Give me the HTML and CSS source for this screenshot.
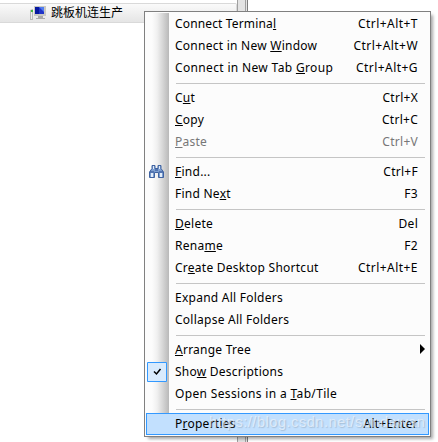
FILE: index.html
```html
<!DOCTYPE html>
<html lang="en">
<head>
<meta charset="utf-8">
<title>Sessions</title>
<link rel="stylesheet" href="styles.css">
</head>
<body>
<div class="window">
  <div class="tree">
    <div class="session">
      <svg class="computer" width="17" height="16" viewBox="0 0 17 16">
        <path d="M0 5l3-1v11H0z" fill="#b9b9b9"/>
        <path d="M1 6h1v8H1z" fill="#eee"/>
        <path d="M1 5h2v2H1z" fill="#42b842"/>
        <path d="M4 1h12v10H4z" fill="#c9c9c4"/>
        <path d="M5 2h9v7H5z" fill="#2034c8"/>
        <path d="M5 2h4v7H5z" fill="#0718a0"/>
        <path d="M9 2l5 5V2z" fill="#527df0"/>
        <path d="M8 11h5v2h2v1H6v-1h2z" fill="#aaa"/>
      </svg>
      <span>跳板机连生产</span>
    </div>
  </div>
  <div class="splitter"></div>
  <div class="workspace"></div>
</div>
<div class="menu">
  <div class="item"><span class="snug">Connect Termina<u>l</u></span><kbd class="wide">Ctrl+Alt+T</kbd></div>
  <div class="item"><span>Connect in New <u>W</u>indow</span><kbd class="wide">Ctrl+Alt+W</kbd></div>
  <div class="item"><span class="roomy">Connect in New Tab <u>G</u>roup</span><kbd class="wide">Ctrl+Alt+G</kbd></div>
  <div class="separator"></div>
  <div class="item"><span>C<u>u</u>t</span><kbd>Ctrl+X</kbd></div>
  <div class="item"><span><u>C</u>opy</span><kbd>Ctrl+C</kbd></div>
  <div class="item disabled"><span><u>P</u>aste</span><kbd>Ctrl+V</kbd></div>
  <div class="separator"></div>
  <div class="item">
    <svg class="binoculars" width="15" height="13" viewBox="0 0 15 13">
      <path d="M3 .5h3v3h3v-3h3v3l2.500 3.500v5.500h-5v-5h-4v5h-5v-5.500l2.500-3.500z" fill="#7c9ed0" stroke="#3f62a0"/>
      <path d="M4 1h1v3H4zM10 1h1v3h-1zM2 8h2v4H2zM11 8h2v4h-2z" fill="#e2edfa"/>
      <path d="M1 7h4M10 7h4M6 5h3" stroke="#2b4c92"/>
    </svg>
    <span><u>F</u>ind...</span><kbd>Ctrl+F</kbd></div>
  <div class="item"><span>Find Ne<u>x</u>t</span><kbd>F3</kbd></div>
  <div class="separator"></div>
  <div class="item"><span><u>D</u>elete</span><kbd>Del</kbd></div>
  <div class="item"><span>Rena<u>m</u>e</span><kbd>F2</kbd></div>
  <div class="item"><span>Cr<u>e</u>ate Desktop Shortcut</span><kbd class="wide">Ctrl+Alt+E</kbd></div>
  <div class="separator"></div>
  <div class="item"><span>Expand All Folders</span></div>
  <div class="item"><span>Collapse All Folders</span></div>
  <div class="separator"></div>
  <div class="item"><span><u>A</u>rrange Tree</span><i class="arrow"></i></div>
  <div class="item">
    <svg class="check" width="20" height="20" viewBox="0 0 20 20">
      <path d="M.5.5h19v19H.5z" fill="#d9ebfd" stroke="#3399ff"/>
      <path d="M7 9.500l2.500 2.500 4-5" fill="none" stroke="#000" stroke-width="1.500"/>
    </svg>
    <span>Sho<u>w</u> Descriptions</span></div>
  <div class="item"><span class="roomy">Open Sessions in a <u>T</u>ab/Tile</span></div>
  <div class="separator"></div>
  <div class="item selected"><span>P<u>r</u>operties</span><kbd>Alt+Enter</kbd><div class="watermark">https://blog.csdn.net/sundawan</div></div>
</div>
</body>
</html>
```
FILE: styles.css
```css
* { box-sizing: border-box; }
body {
  margin: 0;
  width: 438px;
  height: 442px;
  overflow: hidden;
  background: #fff;
  color: #000;
  font: 12px/22px "Noto Sans", "Noto Sans CJK SC", sans-serif;
}
.window { display: flex; height: 442px; }
.tree { width: 237px; padding-top: 3px; }
.session {
  display: flex;
  align-items: center;
  height: 20px;
  padding-left: 30px;
  gap: 4px;
  border: 1px solid #d9d9d9;
  border-left: 0;
  border-radius: 0 2px 2px 0;
  background: linear-gradient(#fafafa, #e5e5e5);
}
.splitter {
  width: 12px;
  background: linear-gradient(90deg, #a0a0a0 1px, #e3e3e3 1px 8px, #a0a0a0 8px 9px, #e3e3e3 9px 10px, #7d7d7d 10px 11px, #fff 11px);
}
.workspace { flex: 1; }
.menu {
  position: absolute;
  left: 144px;
  top: 11px;
  width: 287px;
  height: 426px;
  padding: 1px;
  border: 1px solid #808080;
  background: linear-gradient(90deg, #fcfcfc, #f0f0f0 30%, #b9b9b9) 7px 1px / 17px 422px no-repeat, #fcfcfc;
  box-shadow: 3px 3px 3px -1px rgba(0, 0, 0, .35);
}
.item {
  position: relative;
  display: flex;
  justify-content: space-between;
  height: 22px;
  padding: 0 11px 0 29px;
  line-height: 21px;
  letter-spacing: .25px;
  white-space: pre;
}
.item kbd { font: inherit; letter-spacing: .27px; }
.item .wide { letter-spacing: .45px; }
.item .snug { letter-spacing: .15px; }
.item .roomy { letter-spacing: .34px; }
.item u { text-underline-offset: 1px; text-decoration-thickness: 1px; text-decoration-skip-ink: none; }
.separator { height: 8px; padding: 4px 4px 0 30px; }
.separator::before { content: ""; display: block; height: 1px; background: #c5c5c5; }
.disabled { color: #777; }
.binoculars { position: absolute; left: 3px; top: 4px; }
.check { position: absolute; left: 1px; top: 1px; }
.arrow {
  position: absolute;
  right: 4px;
  top: 5px;
  border: 5px solid transparent;
  border-left-color: #000;
  border-right: 0;
}
.selected { background: #c2e0fe; box-shadow: inset 0 0 0 1px #3399ff; }
.watermark {
  position: absolute;
  left: 63px;
  top: 0;
  color: rgba(245, 248, 252, .62);
  font: 14.5px/19px "Liberation Sans", sans-serif;
  letter-spacing: .55px;
  text-shadow: 1px 1px 1px rgba(110, 120, 130, .3);
}
```
